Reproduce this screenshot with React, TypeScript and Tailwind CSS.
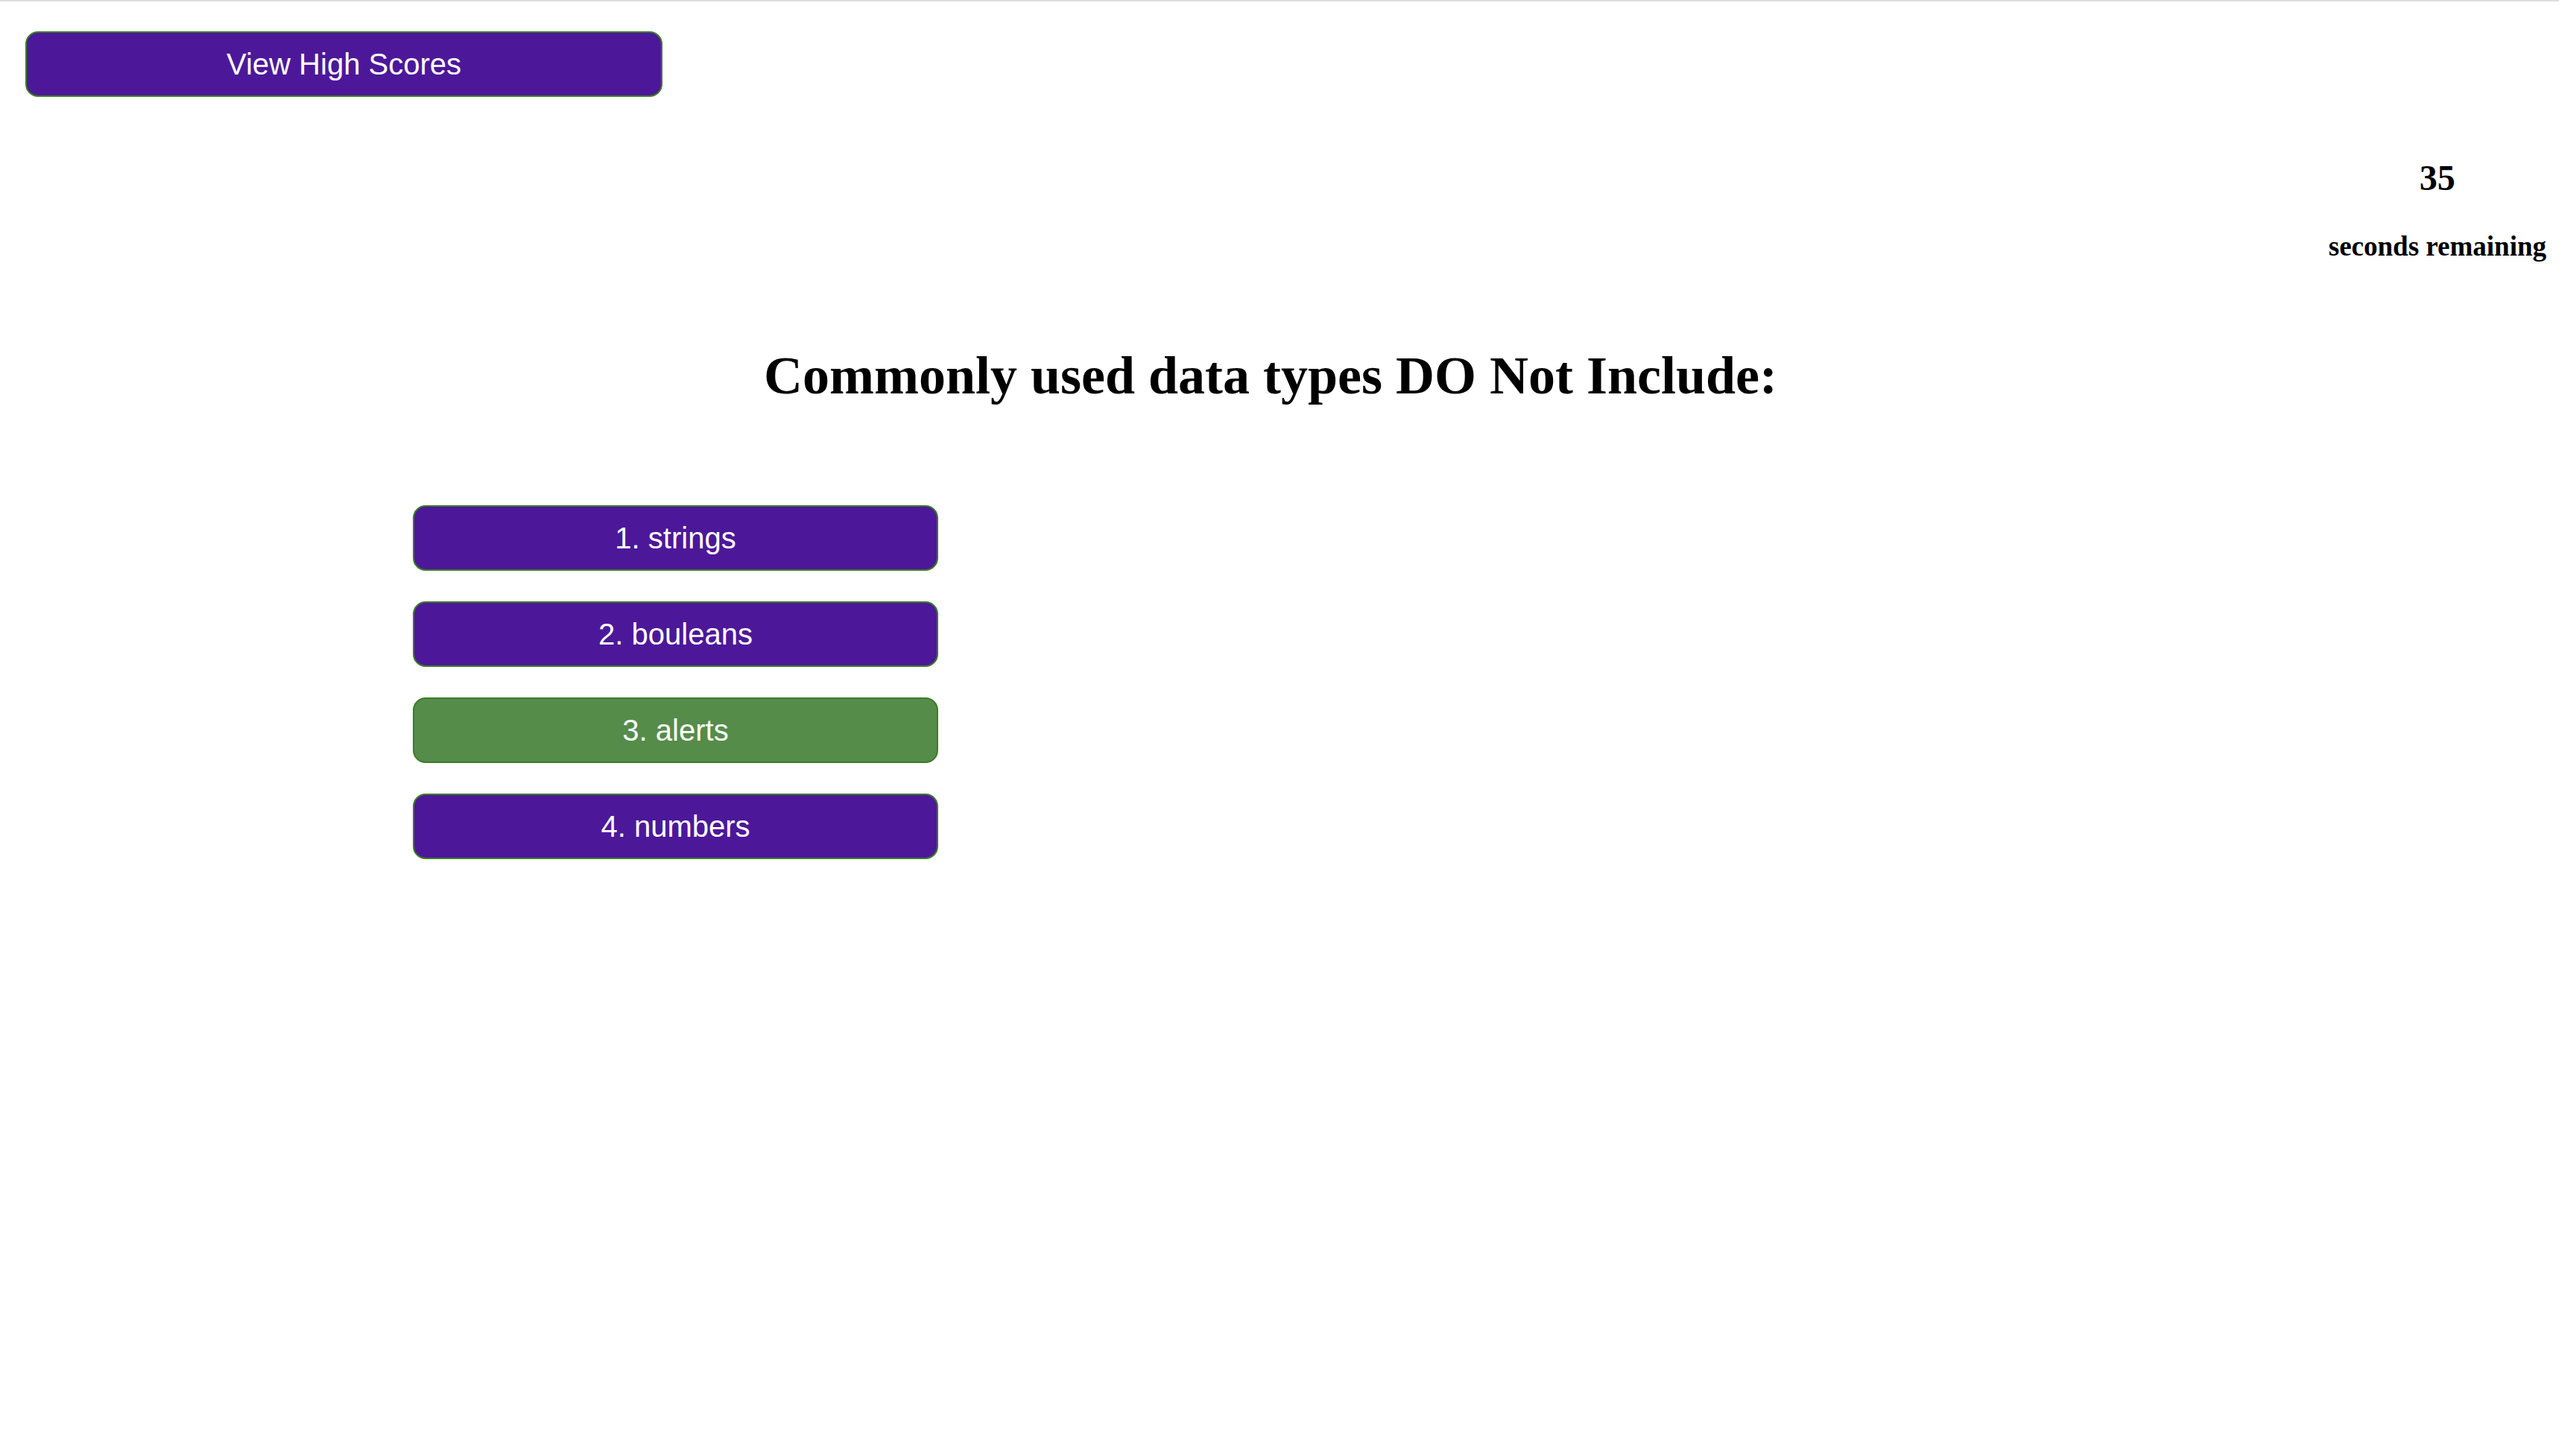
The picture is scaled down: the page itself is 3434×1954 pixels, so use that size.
const answers = [
  { label: "1. strings", correct: false },
  { label: "2. bouleans", correct: false },
  { label: "3. alerts", correct: true },
  { label: "4. numbers", correct: false },
];

export default function App() {
  return (
    <div className="min-h-screen border-t-2 border-[#dddddd] bg-white text-black">
      <header className="flex items-start justify-between pl-[34px] pr-[17px] pt-[40px]">
        <button
          type="button"
          className="h-[88px] w-[855px] rounded-[17px] border-2 border-[#3c7d26] bg-[#4c1899] font-['Liberation_Sans',Arial,sans-serif] text-[40px] leading-none text-white"
        >
          View High Scores
        </button>

        <div className="mt-[173px] flex flex-col items-center font-['Liberation_Serif','Times_New_Roman',serif] font-bold leading-none">
          <div className="text-[48px]">35</div>
          <div className="mt-[49px] text-[37px]">seconds remaining</div>
        </div>
      </header>

      <main>
        <h1 className="mt-[119px] pr-[24px] text-center font-['Liberation_Serif','Times_New_Roman',serif] text-[72px] font-bold leading-none">
          Commonly used data types DO Not Include:
        </h1>

        <div className="mt-[138px] flex flex-col gap-[41px] pl-[554px]">
          {answers.map((a) => (
            <button
              key={a.label}
              type="button"
              className={
                a.correct
                  ? "h-[88px] w-[705px] rounded-[17px] border-2 border-[#3c7d26] bg-[#558c4a] font-['Liberation_Sans',Arial,sans-serif] text-[40px] leading-none text-white"
                  : "h-[88px] w-[705px] rounded-[17px] border-2 border-[#3c7d26] bg-[#4c1899] font-['Liberation_Sans',Arial,sans-serif] text-[40px] leading-none text-white"
              }
            >
              {a.label}
            </button>
          ))}
        </div>
      </main>
    </div>
  );
}
